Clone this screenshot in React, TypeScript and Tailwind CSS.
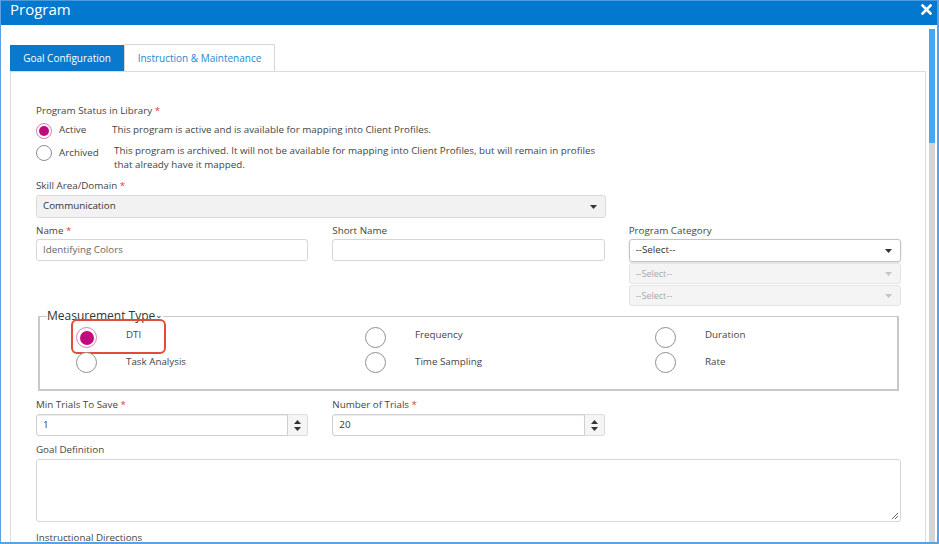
import React from "react";

const font = { fontFamily: "'Open Sans', 'Noto Sans', sans-serif" };

function Req() {
  return <span className="text-[#e0403a]"> *</span>;
}

function Radio({ checked, size }: { checked?: boolean; size: "sm" | "lg" }) {
  const box = size === "sm" ? "w-[16px] h-[16px]" : "w-[21px] h-[21px]";
  const dot = size === "sm" ? "w-[10px] h-[10px]" : "w-[14px] h-[14px]";
  return (
    <span
      className={`${box} shrink-0 rounded-full border flex items-center justify-center bg-white ${
        checked ? "border-[#e27ab9]" : "border-[#8f8f8f]"
      }`}
    >
      {checked && <span className={`${dot} rounded-full bg-[#bf0b7d]`} />}
    </span>
  );
}

function Caret({ light }: { light?: boolean }) {
  return (
    <svg width="7" height="4" viewBox="0 0 7 4" className="shrink-0">
      <path d="M0 0h7L3.5 4z" fill={light ? "#c4c4c4" : "#333"} />
    </svg>
  );
}

function NumberInput({ value }: { value: string }) {
  return (
    <div className="flex h-[22px]">
      <div className="flex-1 border border-[#cfcfcf] rounded-l-[3px] shadow-[inset_0_1px_1px_rgba(0,0,0,0.08)] flex items-center px-[6px] text-[#333]">
        {value}
      </div>
      <div className="w-[20px] border border-l-0 border-[#dcdcdc] rounded-r-[3px] bg-[#f5f5f5] flex flex-col items-center justify-center gap-[3px]">
        <svg width="7" height="4" viewBox="0 0 7 4">
          <path d="M0 4h7L3.5 0z" fill="#333" />
        </svg>
        <svg width="7" height="4" viewBox="0 0 7 4">
          <path d="M0 0h7L3.5 4z" fill="#333" />
        </svg>
      </div>
    </div>
  );
}

const measurement = [
  ["DTI", "Frequency", "Duration"],
  ["Task Analysis", "Time Sampling", "Rate"],
];

export default function App() {
  return (
    <div
      className="w-[939px] h-[544px] overflow-hidden bg-white flex flex-col border-l border-r-2 border-b-2 border-[#5aa2e4]"
      style={font}
    >
      {/* Title bar */}
      <div className="h-[25px] shrink-0 bg-[#0279cf] border-t border-[#4a9ae0] flex items-start justify-between pl-[9px] pr-[5px]">
        <span className="text-white text-[15px] leading-[17px]">Program</span>
        <svg width="11" height="11" viewBox="0 0 11 11" className="mt-[3px]">
          <path d="M1.5 1.5l8 8M9.5 1.5l-8 8" stroke="#fff" strokeWidth="2.6" strokeLinecap="square" />
        </svg>
      </div>

      <div className="flex flex-1 min-h-0">
        {/* Content */}
        <div className="flex-1 min-w-0 pl-[9px] pr-[3px] pt-[20px] flex flex-col">
          {/* Tabs */}
          <div className="flex h-[26px] items-end text-[10px]">
            <div className="h-[26px] w-[114px] bg-[#0a78cd] text-white flex items-center justify-center">
              Goal Configuration
            </div>
            <div className="h-[27px] w-[151px] border border-b-0 border-[#d6d6d6] rounded-t-[2px] text-[#1a8ad8] flex items-center justify-center">
              Instruction &amp; Maintenance
            </div>
          </div>

          {/* Panel */}
          <div className="flex-1 border-l border-r border-t border-[#dcdcdc] pl-[25px] pr-[24px] pt-[31px] text-[9.8px] text-[#444]">
            <div className="leading-[15px]">
              Program Status in Library<Req />
            </div>

            <div className="mt-[4px] flex items-center h-[17px]">
              <Radio size="sm" checked />
              <span className="ml-[7px] w-[53px]">Active</span>
              <span>This program is active and is available for mapping into Client Profiles.</span>
            </div>
            <div className="mt-[6px] flex items-start">
              <Radio size="sm" />
              <span className="ml-[7px] w-[55px] mt-[1px]">Archived</span>
              <span className="leading-[14px] -mt-[1px] w-[500px]">
                This program is archived. It will not be available for mapping into Client Profiles, but will remain in profiles that already have it mapped.
              </span>
            </div>

            <div className="mt-[6px] leading-[15px]">
              Skill Area/Domain<Req />
            </div>
            <div className="mt-[2px] w-[570px] h-[23px] bg-[#f2f2f2] border border-[#dadada] rounded-[3px] flex items-center justify-between pl-[6px] pr-[8px] text-[#333]">
              <span>Communication</span>
              <Caret />
            </div>

            <div className="mt-[5px] grid grid-cols-3 gap-x-[24px]">
              <div>
                <div className="leading-[15px]">
                  Name<Req />
                </div>
                <div className="mt-[1px] h-[22px] border border-[#d6d6d6] rounded-[3px] flex items-center px-[6px] text-[#666]">
                  Identifying Colors
                </div>
              </div>
              <div>
                <div className="leading-[15px]">Short Name</div>
                <div className="mt-[1px] h-[22px] border border-[#d6d6d6] rounded-[3px]" />
              </div>
              <div>
                <div className="leading-[15px]">Program Category</div>
                <div className="mt-[1px] h-[23px] border border-[#c4c4c4] rounded-[3px] shadow-[0_1px_2px_rgba(0,0,0,0.15)] flex items-center justify-between pl-[6px] pr-[8px] text-[#333]">
                  <span>--Select--</span>
                  <Caret />
                </div>
                <div className="mt-[1px] h-[21px] bg-[#f4f4f4] border border-[#e4e4e4] rounded-[3px] flex items-center justify-between pl-[6px] pr-[8px] text-[#a8a8a8] text-[9px]">
                  <span>--Select--</span>
                  <Caret light />
                </div>
                <div className="mt-[1px] h-[21px] bg-[#f4f4f4] border border-[#e4e4e4] rounded-[3px] flex items-center justify-between pl-[6px] pr-[8px] text-[#a8a8a8] text-[9px]">
                  <span>--Select--</span>
                  <Caret light />
                </div>
              </div>
            </div>

            {/* Measurement Type */}
            <fieldset className="mt-[3px] mx-[2px] h-[82px] border-2 border-[#c8c8c8] border-t border-l-2 pb-[6px]">
              <legend className="ml-[7px] text-[12px] text-[#333] leading-[14px] px-0">
                Measurement Type<span className="text-[9px] relative -top-[2px]">⌄</span>
              </legend>
              <div className="grid grid-cols-[289px_290px_1fr] pl-[36px] -mt-[1px]">
                {measurement.map((row, ri) =>
                  row.map((label, ci) => (
                    <div
                      key={label}
                      className={`relative flex ${ri === 0 ? "h-[26px] items-start" : "h-[26px] items-center"}`}
                    >
                      <span className={ri === 0 ? "mt-[4px]" : ""}>
                        <Radio size="lg" checked={label === "DTI"} />
                      </span>
                      <span className={`ml-[29px] text-[#444] ${ri === 0 ? "mt-[5px]" : ""}`}>{label}</span>
                      {ri === 0 && ci === 0 && (
                        <span className="absolute left-[-5px] top-[-4px] w-[95px] h-[35px] border-2 border-[#e04c3a] rounded-[6px]" />
                      )}
                    </div>
                  ))
                )}
              </div>
            </fieldset>

            <div className="mt-[6px] grid grid-cols-3 gap-x-[24px]">
              <div>
                <div className="leading-[15px]">
                  Min Trials To Save<Req />
                </div>
                <div className="mt-[2px]">
                  <NumberInput value="1" />
                </div>
              </div>
              <div>
                <div className="leading-[15px]">
                  Number of Trials<Req />
                </div>
                <div className="mt-[2px]">
                  <NumberInput value="20" />
                </div>
              </div>
            </div>

            <div className="mt-[6px] leading-[15px]">Goal Definition</div>
            <div className="mt-[2px] relative h-[63px] border border-[#d6d6d6] rounded-[3px]">
              <svg width="7" height="7" viewBox="0 0 7 7" className="absolute right-[2px] bottom-[2px]">
                <path d="M1 7L7 1M4 7L7 4" stroke="#666" strokeWidth="1" />
              </svg>
            </div>
            <div className="mt-[8px] leading-[15px]">Instructional Directions</div>
          </div>
        </div>

        {/* Scrollbar */}
        <div className="w-[6px] shrink-0 mr-[2px] pt-[4px] flex flex-col">
          <div className="h-[114px] bg-[#46a8f2]" />
          <div className="flex-1 bg-[#d4d4d4]" />
        </div>
      </div>
    </div>
  );
}
